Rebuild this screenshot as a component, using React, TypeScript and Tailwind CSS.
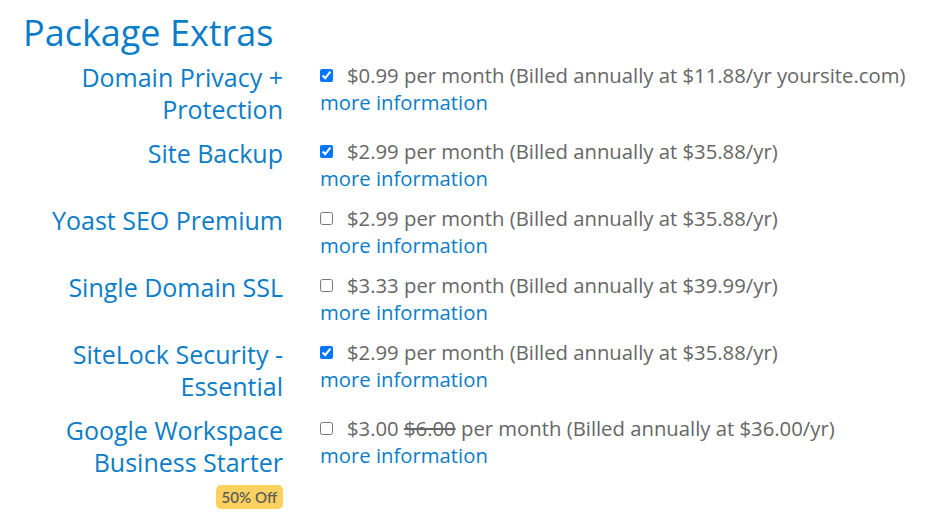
import React from "react"

interface Extra {
  label: string[]
  checked: boolean
  price: React.ReactNode
  badge?: string
}

const extras: Extra[] = [
  {
    label: ["Domain Privacy +", "Protection"],
    checked: true,
    price: "$0.99 per month (Billed annually at $11.88/yr yoursite.com)"
  },
  {
    label: ["Site Backup"],
    checked: true,
    price: "$2.99 per month (Billed annually at $35.88/yr)"
  },
  {
    label: ["Yoast SEO Premium"],
    checked: false,
    price: "$2.99 per month (Billed annually at $35.88/yr)"
  },
  {
    label: ["Single Domain SSL"],
    checked: false,
    price: "$3.33 per month (Billed annually at $39.99/yr)"
  },
  {
    label: ["SiteLock Security -", "Essential"],
    checked: true,
    price: "$2.99 per month (Billed annually at $35.88/yr)"
  },
  {
    label: ["Google Workspace", "Business Starter"],
    checked: false,
    price: (
      <>
        $3.00 <span className="line-through">$6.00</span> per month (Billed
        annually at $36.00/yr)
      </>
    ),
    badge: "50% Off"
  }
]

const ExtraRow: React.FC<{ extra: Extra }> = ({ extra }) => (
  <>
    <div className="flex flex-col items-end text-right">
      {extra.label.map((line) => (
        <span key={line} className="text-[25px] leading-[32px] text-[#0b7dc8]">
          {line}
        </span>
      ))}
      {extra.badge && (
        <span className="mt-[7px] rounded-[5px] bg-[#fdd15e] px-[6px] text-[15px] leading-[24px] font-semibold text-[#5b5b5b] font-['Lato',sans-serif]">
          {extra.badge}
        </span>
      )}
    </div>
    <div className="pt-[1px]">
      <label className="flex items-center text-[20.3px] leading-[27px] text-[#666666]">
        <input
          type="checkbox"
          defaultChecked={extra.checked}
          className="mr-[14px] h-[13px] w-[13px]"
        />
        <span>{extra.price}</span>
      </label>
      <a href="#" className="block text-[20.3px] leading-[27px] text-[#0b7dc8]">
        more information
      </a>
    </div>
  </>
)

export default function App() {
  return (
    <div className="min-h-[523px] bg-white pl-[23px] pt-[12px] font-['Open_Sans',sans-serif]">
      <h2 className="text-[36px] leading-[42px] text-[#0b7dc8]">Package Extras</h2>
      <div className="mt-[7px] grid grid-cols-[260px_1fr] gap-x-[37px] gap-y-[12px]">
        {extras.map((extra) => (
          <ExtraRow key={extra.label.join(" ")} extra={extra} />
        ))}
      </div>
    </div>
  )
}
